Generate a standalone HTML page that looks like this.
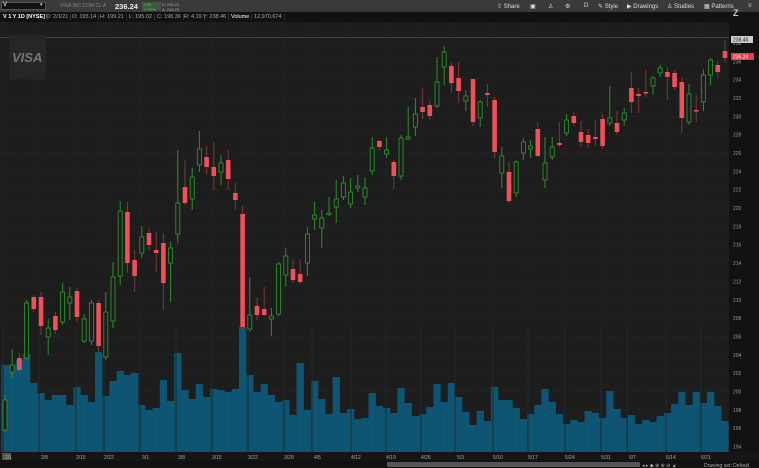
<!DOCTYPE html>
<html><head><meta charset="utf-8"><style>
*{margin:0;padding:0;box-sizing:border-box}
body{width:759px;height:468px;background:#1b1b1b;font-family:"Liberation Sans",sans-serif;overflow:hidden;position:relative;color:#ccc}
.tb{position:absolute;left:0;top:0;width:759px;height:12px;background:#3a3a3a;font-size:6px;color:#ddd}
.tb span{position:absolute;top:3px;white-space:nowrap}
.info{position:absolute;left:0;top:12px;width:759px;height:10px;background:#111;font-size:5.5px;color:#aaa}
.info span{position:absolute;top:2px;white-space:nowrap;padding:0 2px;border-right:1px solid #333}
</style></head><body>
<div class="tb">
<div style="position:absolute;left:1px;top:2px;width:45px;height:8px;background:#111;border:1px solid #555"></div>
<span style="left:3px;top:2px;color:#fff">V</span>
<span style="left:40px;top:2px;font-size:5px">▾</span>
<span style="left:60px;color:#888;font-size:5px">VISA INC COM CL A</span>
<span style="left:115px;top:2px;font-size:7.5px;font-weight:bold;color:#eee">236.24</span>
<div style="position:absolute;left:142px;top:2px;width:19px;height:8px;background:#3f5a3f"></div>
<span style="left:143px;top:2px;font-size:4px;color:#6c6">+.05<br>-0.02%</span>
<span style="left:162px;top:2px;font-size:4px;color:#aaa">B: 236.24<br>A: 236.79</span>
<span style="left:497px">⇪ Share</span><span style="left:530px">▣</span><span style="left:548px">♙</span><span style="left:565px">⚙</span><span style="left:584px">D</span><span style="left:598px">✎ Style</span><span style="left:627px">▶ Drawings</span><span style="left:667px">♙ Studies</span><span style="left:704px">▦ Patterns</span><span style="left:748px">≡</span>
</div>
<div class="info">
<span style="color:#fff;font-weight:bold;left:1px">V 1 Y 1D [NYSE]</span>
<span style="left:44px">D: 2/1/21</span><span style="left:70px">O: 195.14</span><span style="left:98px">H: 199.21</span><span style="left:127px">L: 195.02</span><span style="left:155px">C: 198.36</span><span style="left:182px">R: 4.19</span><span style="left:201px">Y: 238.46</span><span style="left:229px;color:#fff">Volume</span><span style="left:252px">12,970,674</span>
</div>
<svg id="c" width="759" height="468" style="position:absolute;left:0;top:0"></svg>
<script>
var s='';
function r(x,y,w,h,f){s+='<rect x="'+x+'" y="'+y+'" width="'+w+'" height="'+h+'" fill="'+f+'"/>';}
function l(x1,y1,x2,y2,c,d){s+='<line x1="'+x1+'" y1="'+y1+'" x2="'+x2+'" y2="'+y2+'" stroke="'+c+'" stroke-width="1"'+(d?' stroke-dasharray="1 2"':'')+'/>';}
function t(x,y,txt,c,sz,a){s+='<text x="'+x+'" y="'+y+'" fill="'+c+'" font-size="'+(sz||5)+'" font-family="Liberation Sans" '+(a||'')+'>'+txt+'</text>';}
r(0,22,729,430,'#1d1d1d');
r(729,22,30,440,'#121212');
l(0,37.5,729,37.5,'#444');
// grid
for(var p=194;p<=238;p+=2){var y=43+(238-p)*9.17;l(0,y,729,y,'#2a2a2a',1);t(733,y+2,p,'#999',5);}
var dates=[[6,'2/1'],[42,'2/8'],[79,'2/15'],[107,'2/22'],[143,'3/1'],[179,'3/8'],[215,'3/15'],[251,'3/22'],[287,'3/29'],[315,'4/5'],[354,'4/12'],[389,'4/19'],[424,'4/26'],[458,'5/3'],[496,'5/10'],[531,'5/17'],[568,'5/24'],[604,'5/31'],[630,'6/7'],[669,'6/14'],[704,'6/21']];
dates.forEach(function(d){l(d[0]-3,22,d[0]-3,452,'#262626',1);});
// volume
var v=[365,365,360,354,383,393,400,395,395,405,387,395,402,352,396,381,371,375,373,405,410,408,380,401,353,390,399,384,397,389,390,392,389,327,375,392,384,395,402,400,415,363,410,381,399,414,377,413,409,419,418,393,406,408,413,388,403,416,414,407,384,402,383,397,412,425,411,421,387,400,400,408,419,414,405,389,402,414,424,420,422,411,413,418,391,409,418,415,424,420,422,416,413,404,392,405,392,403,392,406,421];
for(var i=0;i<v.length;i++){var x=1.4+7.2*i;r(x,v[i],7.3,452-v[i],'#0d5572');}
dates.forEach(function(d){l(d[0]-3,330,d[0]-3,452,'#1a2a30');});
// candles [wt,bt,bb,wb,up]
var c=[[395,400,430,432,1],[349,365,372,378,1],[353,358,370,376,0],[300,303,358,360,1],[295,297,309,312,0],[292,297,326,335,0],[319,328,337,355,1],[312,316,330,334,0],[283,292,322,325,1],[287,297,303,320,1],[288,291,317,322,0],[314,319,341,343,1],[300,303,341,345,1],[300,303,346,352,0],[292,312,357,360,1],[262,277,321,328,1],[201,211,276,285,1],[202,212,263,273,0],[250,260,276,292,0],[226,237,253,258,1],[228,233,245,250,0],[232,250,253,272,0],[233,243,283,310,0],[242,248,263,302,1],[150,203,234,243,1],[160,187,203,205,0],[168,177,199,210,1],[131,149,165,172,1],[146,157,167,175,0],[142,167,176,190,0],[155,163,172,185,1],[150,160,179,190,0],[183,193,200,210,0],[205,214,327,330,0],[277,315,329,332,1],[297,306,315,320,0],[287,309,315,316,0],[308,316,319,336,1],[262,264,314,316,1],[248,256,275,287,1],[259,269,280,283,0],[259,274,282,284,0],[227,234,263,276,1],[202,215,219,230,1],[210,218,228,248,1],[197,213,214,216,1],[180,199,207,223,1],[176,183,197,200,1],[178,192,204,208,1],[175,186,188,192,1],[178,188,197,205,1],[137,148,171,175,1],[140,141,147,150,0],[137,150,154,158,1],[160,162,176,189,0],[135,138,176,180,1],[107,137,139,140,1],[98,114,127,136,1],[88,107,112,119,0],[100,105,116,120,0],[57,82,106,108,1],[46,52,67,85,1],[62,66,83,93,0],[62,78,91,103,0],[90,96,101,111,1],[79,79,122,126,0],[100,102,118,127,1],[84,93,95,107,0],[97,100,152,158,0],[147,156,173,188,1],[162,172,201,203,0],[160,162,193,197,1],[138,142,153,160,1],[140,146,149,158,1],[122,129,156,157,0],[137,163,180,188,1],[137,147,157,160,1],[122,143,145,147,0],[114,120,133,136,1],[112,116,123,126,0],[121,132,142,147,0],[129,135,143,148,0],[120,137,139,146,0],[114,119,146,149,0],[86,118,123,126,1],[111,123,132,135,0],[108,113,120,126,1],[72,88,102,113,0],[88,94,96,113,0],[70,92,93,97,0],[76,78,86,95,1],[65,68,73,77,1],[67,72,77,100,0],[70,73,87,90,0],[77,82,118,133,0],[84,94,122,125,1],[95,110,111,122,0],[69,75,102,111,1],[58,60,75,85,1],[61,65,72,78,0],[40,51,58,62,0]];
for(var i=0;i<c.length;i++){var k=c[i],x=5+7.2*i;var col=k[4]?'#2f8f2f':'#f0505a';var wc=k[4]?'#2f8f2f':'#7a3a3a';
l(x,k[0],x,k[3],wc);var h=Math.max(1.5,k[2]-k[1]);
if(k[4]) s+='<rect x="'+(x-2)+'" y="'+k[1]+'" width="4" height="'+h+'" fill="#1d1d1d" stroke="'+col+'" stroke-width="0.9"/>';
else r(x-2.3,k[1],4.6,h,col);}
// price tags
r(731,36,22,7,'#ccc');t(733,41.5,'238.46','#222',5);
r(731,53,23,7,'#e0404a');t(733,58.5,'236.24','#fff',5);
t(733,16,'Z','#ccc',9,'font-weight="bold"');
// dates
r(0,452,759,9,'#151515');
dates.forEach(function(d,j){if(j==0){r(2,453,9,7,'#555');}t(d[0]-1-(d[1].length>3?2:0),459,d[1],'#aaa',5);});
// scrollbar
r(0,461,759,7,'#111');r(387,462,253,5,'#555');
t(642,467,'◂ ▸ ◆ ⊕ ⊕ ⊖ ▲','#aaa',5);t(704,467,'Drawing set: Default','#aaa',5);
// logo
r(9,35,37,44,'#262626');
t(12,62,'VISA','#777',13,'font-weight="bold" font-style="italic"');
document.getElementById('c').innerHTML=s;
</script>
</body></html>
